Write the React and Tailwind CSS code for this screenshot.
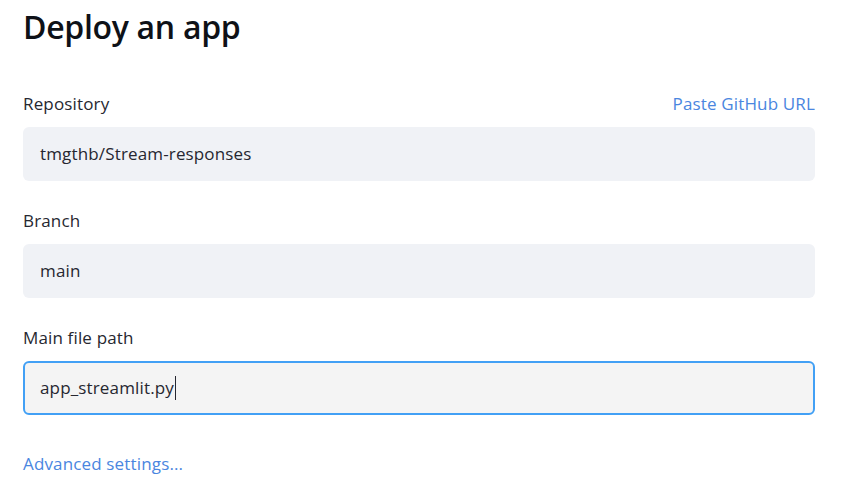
import React from 'react';

const Field = ({ label, value, right, focused }) => (
  <div className="flex flex-col">
    <div className="flex items-center justify-between h-[24px] text-[17px] tracking-[0.15px] text-[#262730]">
      <span>{label}</span>
      {right && <span className="text-[#4a86e0]">{right}</span>}
    </div>
    <div
      className={`mt-[11px] h-[54px] rounded-[6px] flex items-center text-[17px] tracking-[0.15px] text-[#262730] ${
        focused ? 'bg-[#f4f4f4] border-2 border-[#42a0f5] px-[15px]' : 'bg-[#f0f2f6] px-[17px]'
      }`}
    >
      <span>{value}</span>
      {focused && <span className="w-px h-[24px] bg-[#262730] ml-[1px]" />}
    </div>
  </div>
);

const App = () => {
  return (
    <div className="min-h-screen bg-white font-['Open_Sans','Noto_Sans',sans-serif]">
      <div className="w-[792px] ml-[23px] pt-[7px]">
        <h1 className="text-[32px] leading-[40px] font-semibold tracking-[-0.3px] text-[#0e1117]">Deploy an app</h1>
        <div className="mt-[45px] flex flex-col gap-[28px]">
          <Field label="Repository" value="tmgthb/Stream-responses" right="Paste GitHub URL" />
          <Field label="Branch" value="main" />
          <Field label="Main file path" value="app_streamlit.py" focused />
        </div>
        <div className="mt-[36px] text-[17px] tracking-[0.15px] text-[#4a86e0]">Advanced settings...</div>
      </div>
    </div>
  );
};

export default App;
